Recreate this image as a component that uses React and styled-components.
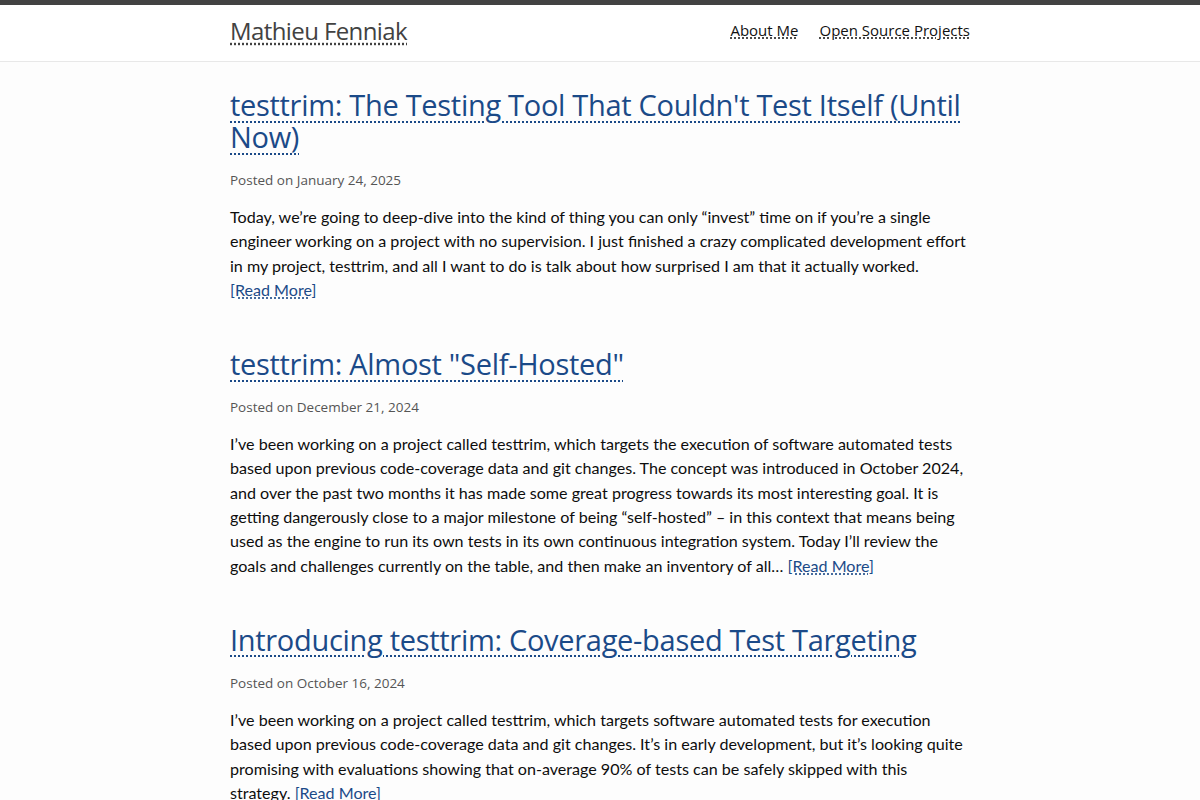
import React from "react";
import styled, { createGlobalStyle } from "styled-components";

const GlobalStyle = createGlobalStyle`
  html, body {
    margin: 0;
    padding: 0;
    background: #fdfdfd;
    color: #111;
    font-family: "Open Sans", "Noto Sans", sans-serif;
  }
`;

const Header = styled.header`
  border-top: 5px solid #424242;
  border-bottom: 1px solid #e8e8e8;
  background: #fff;
`;

const Wrapper = styled.div`
  max-width: 740px;
  margin: 0 auto;
`;

const HeaderInner = styled(Wrapper)`
  height: 56px;
  box-sizing: border-box;
  padding-bottom: 6px;
  display: flex;
  align-items: center;
  justify-content: space-between;
`;

const SiteTitle = styled.a`
  font-size: 24px;
  color: #424242;
  text-decoration: underline dotted;
  text-underline-offset: 4px;
  letter-spacing: -0.6px;
`;

const Nav = styled.nav`
  display: flex;
  gap: 21px;
`;

const NavLink = styled.a`
  font-size: 15px;
  color: #111;
  text-decoration: underline dotted;
  text-underline-offset: 2px;
`;

const Main = styled(Wrapper)`
  padding-top: 27px;
`;

const Post = styled.article`
  margin-bottom: 46px;
`;

const PostTitle = styled.h2`
  margin: 0;
  font-size: 29px;
  font-weight: 400;
  line-height: 32px;
  letter-spacing: -0.3px;

  a {
    color: #1b4a88;
    text-decoration: underline dotted;
    text-decoration-thickness: 2px;
    text-underline-offset: 5px;
  }
`;

const Meta = styled.p`
  margin: 18px 0 0;
  font-size: 13.5px;
  color: #555;
`;

const Excerpt = styled.p`
  margin: 16px 0 0;
  font-family: "Lato", "Open Sans", sans-serif;
  font-size: 16.1px;
  line-height: 24.3px;
  color: #0d0d0d;
`;

const ReadMore = styled.a`
  color: #1b4a88;
  white-space: nowrap;
  text-decoration: underline dotted;
  text-underline-offset: 2px;
`;

const posts = [
  {
    title: "testtrim: The Testing Tool That Couldn't Test Itself (Until Now)",
    date: "January 24, 2025",
    excerpt:
      "Today, we’re going to deep-dive into the kind of thing you can only “invest” time on if you’re a single engineer working on a project with no supervision. I just finished a crazy complicated development effort in my project, testtrim, and all I want to do is talk about how surprised I am that it actually worked.",
  },
  {
    title: 'testtrim: Almost "Self-Hosted"',
    date: "December 21, 2024",
    excerpt:
      "I’ve been working on a project called testtrim, which targets the execution of software automated tests based upon previous code-coverage data and git changes. The concept was introduced in October 2024, and over the past two months it has made some great progress towards its most interesting goal. It is getting dangerously close to a major milestone of being “self-hosted” – in this context that means being used as the engine to run its own tests in its own continuous integration system. Today I’ll review the goals and challenges currently on the table, and then make an inventory of all…",
  },
  {
    title: "Introducing testtrim: Coverage-based Test Targeting",
    date: "October 16, 2024",
    excerpt:
      "I’ve been working on a project called testtrim, which targets software automated tests for execution based upon previous code-coverage data and git changes. It’s in early development, but it’s looking quite promising with evaluations showing that on-average 90% of tests can be safely skipped with this strategy.",
  },
];

export default function App() {
  return (
    <>
      <GlobalStyle />
      <Header>
        <HeaderInner>
          <SiteTitle href="#">Mathieu Fenniak</SiteTitle>
          <Nav>
            <NavLink href="#">About Me</NavLink>
            <NavLink href="#">Open Source Projects</NavLink>
          </Nav>
        </HeaderInner>
      </Header>
      <Main>
        {posts.map((post, i) => (
          <Post key={i}>
            <PostTitle>
              <a href="#">{post.title}</a>
            </PostTitle>
            <Meta>Posted on {post.date}</Meta>
            <Excerpt>
              {post.excerpt} <ReadMore href="#">[Read More]</ReadMore>
            </Excerpt>
          </Post>
        ))}
      </Main>
    </>
  );
}
